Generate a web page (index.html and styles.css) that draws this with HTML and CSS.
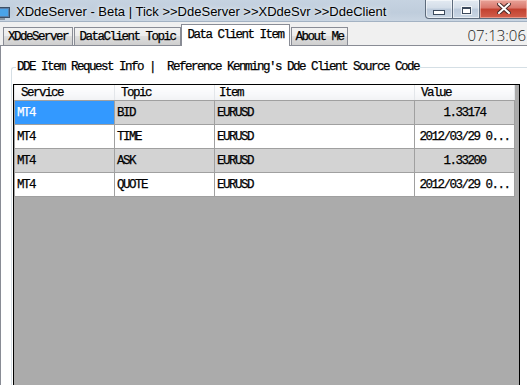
FILE: index.html
```html
<!DOCTYPE html>
<html>
<head>
<meta charset="utf-8">
<title>XDdeServer</title>
<link rel="stylesheet" href="styles.css">
</head>
<body>
<div class="window">
	<div class="titlebar">
		<svg class="app-icon" width="16" height="14" viewBox="0 0 16 14">
			<rect x="0.5" y="0.5" width="15" height="10" fill="#5b7fa8" stroke="#3c4f66"/>
			<rect x="2" y="2" width="12" height="7" fill="#4aa3e8"/>
			<rect x="5" y="11" width="6" height="2" fill="#8a96a3"/>
		</svg>
		<span class="title">XDdeServer - Beta | Tick &gt;&gt;DdeServer &gt;&gt;XDdeSvr &gt;&gt;DdeClient</span>
		<div class="caption">
			<span class="cbtn min"><i></i></span>
			<span class="cbtn max"><i></i></span>
			<span class="cbtn close">
				<svg width="14" height="11" viewBox="0 0 14 11">
					<path d="M2 1 L12 10 M12 1 L2 10" stroke="#4a2a28" stroke-width="4" stroke-linecap="square"/>
					<path d="M2 1 L12 10 M12 1 L2 10" stroke="#ffffff" stroke-width="2" stroke-linecap="square"/>
				</svg>
			</span>
		</div>
	</div>

	<div class="client">
		<div class="tabstrip">
			<span class="tab t1">XDdeServer</span>
			<span class="tab t2">DataClient Topic</span>
			<span class="tab t3 active">Data Client Item</span>
			<span class="tab t4">About Me</span>
			<span class="clock">07:13:06</span>
		</div>

		<div class="tabpage">
			<fieldset class="group">
				<legend>DDE Item Request Info |&nbsp; Reference Kenming's Dde Client Source Code</legend>
				<div class="grid">
					<table>
						<tr class="head">
							<th class="c1">Service</th>
							<th class="c2">Topic</th>
							<th class="c3">Item</th>
							<th class="c4">Value</th>
						</tr>
						<tr class="alt">
							<td class="sel">MT4</td>
							<td>BID</td>
							<td>EURUSD</td>
							<td class="num">1.33174</td>
						</tr>
						<tr>
							<td>MT4</td>
							<td>TIME</td>
							<td>EURUSD</td>
							<td class="num">2012/03/29 0...</td>
						</tr>
						<tr class="alt">
							<td>MT4</td>
							<td>ASK</td>
							<td>EURUSD</td>
							<td class="num">1.33200</td>
						</tr>
						<tr>
							<td>MT4</td>
							<td>QUOTE</td>
							<td>EURUSD</td>
							<td class="num">2012/03/29 0...</td>
						</tr>
					</table>
				</div>
			</fieldset>
		</div>
	</div>
</div>
</body>
</html>
```

FILE: styles.css
```css
html, body {
	margin: 0;
	padding: 0;
	width: 527px;
	height: 385px;
	overflow: hidden;
	background: #f0f0f0;
}
.window {
	width: 527px;
	height: 385px;
	display: flex;
	flex-direction: column;
	overflow: hidden;
}

/* title bar */
.titlebar {
	height: 22px;
	display: flex;
	align-items: flex-start;
	background: linear-gradient(to bottom, #c6d3e1 0%, #bfcddc 60%, #c9d5e2 100%);
	border-bottom: 1px solid #a3b2c3;
	box-sizing: border-box;
	flex: none;
}
.app-icon {
	margin: 7px 0 0 -6px;
	flex: none;
}
.title {
	margin: 4px 0 0 6px;
	font-family: "Liberation Sans", Arial, sans-serif;
	font-size: 13px;
	color: #000;
	white-space: nowrap;
	text-shadow: 0 0 6px #eef3f8, 0 0 3px #eef3f8;
}
.caption {
	margin-left: auto;
	display: flex;
	flex: none;
}
.cbtn {
	height: 19px;
	box-sizing: border-box;
	border: 1px solid #5d6b7c;
	border-top: none;
	display: flex;
	align-items: center;
	justify-content: center;
	flex: none;
}
.min {
	width: 28px;
	border-radius: 0 0 0 4px;
	background: linear-gradient(to bottom, #e3eaf2 0%, #d3dde8 45%, #bccadb 50%, #c9d6e4 100%);
	box-shadow: inset 0 0 0 1px rgba(255,255,255,0.55);
}
.max {
	width: 27px;
	border-left: none;
	background: linear-gradient(to bottom, #e3eaf2 0%, #d3dde8 45%, #bccadb 50%, #c9d6e4 100%);
	box-shadow: inset 0 0 0 1px rgba(255,255,255,0.55);
}
.close {
	width: 47px;
	border-left: none;
	border-right: none;
	background: linear-gradient(to bottom, #e8a399 0%, #d9766a 45%, #c2402f 50%, #d25f4c 100%);
	box-shadow: inset 0 0 0 1px rgba(255,210,200,0.5);
}
.min i {
	display: block;
	width: 10px;
	height: 3px;
	margin-top: 7px;
	background: #fff;
	border: 1px solid #3c4a5c;
}
.max i {
	display: block;
	width: 7px;
	height: 4px;
	margin-top: 2px;
	border: 1px solid #3c4a5c;
	border-top-width: 2px;
	background: #fff;
	outline: 1px solid rgba(255,255,255,0.7);
}
.close svg {
	margin-top: -1px;
}

/* client */
.client {
	flex: 1;
	min-height: 0;
	display: flex;
	flex-direction: column;
	background: #f0f0f0;
}
.tabstrip {
	height: 23px;
	display: flex;
	align-items: flex-end;
	padding-left: 3px;
	flex: none;
}
.tab, .group legend, .grid table {
	font-family: "Liberation Mono", monospace;
	font-size: 12.5px;
	letter-spacing: -1.5px;
	-webkit-text-stroke: 0.25px #000;
}
.tab {
	height: 18px;
	box-sizing: border-box;
	border: 1px solid #898c95;
	border-bottom: none;
	background: linear-gradient(to bottom, #f2f2f2 0%, #ebebeb 50%, #dddddd 50%, #cfcfcf 100%);
	color: #000;
	display: flex;
	align-items: center;
	justify-content: center;
	padding-top: 1px;
	white-space: nowrap;
}
.t1 { width: 70px; margin-right: 1px; }
.t2 { width: 107px; }
.t3 { width: 109px; }
.t4 { width: 57px; margin-left: 1px; }
.tab.active {
	height: 22px;
	margin-bottom: -1px;
	background: #fff;
	padding-top: 0;
	padding-bottom: 2px;
	z-index: 1;
}
.clock {
	margin-left: auto;
	align-self: center;
	margin-right: 1px;
	margin-top: 2px;
	font-family: "Open Sans", "Liberation Sans", sans-serif;
	font-weight: 300;
	font-size: 15px;
	color: #222;
}

.tabpage {
	flex: 1;
	min-height: 0;
	overflow: hidden;
	background: #fff;
	border-top: 1px solid #898c95;
	border-left: 1px solid #898c95;
	padding: 14px 0 0 10px;
}

/* group box */
.group {
	margin: 0;
	padding: 10px 0 0 1px;
	border: 1px solid #d5dfe5;
	border-right: none;
	border-bottom: none;
	border-radius: 3px 0 0 0;
	height: 330px;
	box-sizing: border-box;
}
.group legend {
	margin-left: 3px;
	padding: 0 1px;
	line-height: 14px;
	white-space: pre;
	color: #000;
}

/* data grid */
.grid {
	width: 507px;
	height: 310px;
	box-sizing: border-box;
	border: 1px solid #000;
	background: #ababab;
}
.grid table {
	border-collapse: collapse;
	table-layout: fixed;
	width: 501px;
}
.grid th, .grid td {
	padding: 0 0 0 2px;
	text-align: left;
	white-space: nowrap;
	overflow: hidden;
	font-weight: normal;
	color: #000;
}
.grid th {
	height: 15px;
	padding-left: 6px;
	background: linear-gradient(to bottom, #ffffff 0%, #f7f8fa 60%, #f1f2f4 100%);
	border-right: 1px solid #e3e6ea;
	border-left: 1px solid #e3e6ea;
	border-bottom: 1px solid #a0a0a0;
	vertical-align: middle;
}
.grid th.c1 { width: 93px; }
.grid th.c2 { width: 93px; }
.grid th.c3 { width: 195px; padding-left: 4px; }
.grid th.c4 { width: 93px; }
.grid td {
	height: 23px;
	border: 1px solid #a0a0a0;
	background: #fff;
	vertical-align: middle;
}
.grid tr.alt td {
	background: #d3d3d3;
}
.grid tr.alt td.sel {
	background: #3399ff;
	color: #fff;
	-webkit-text-stroke: 0.25px #fff;
}
.grid td.num {
	text-align: center;
	padding-left: 0;
}
```
